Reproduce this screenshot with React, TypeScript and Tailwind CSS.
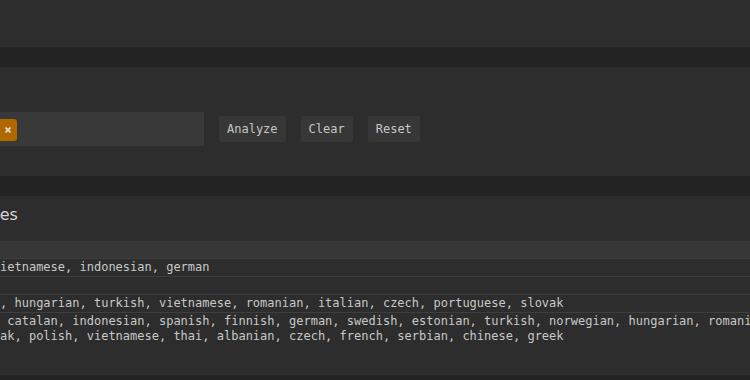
const rows = [
  "vietnamese, indonesian, german",
  "",
  "n, hungarian, turkish, vietnamese, romanian, italian, czech, portuguese, slovak",
  ", catalan, indonesian, spanish, finnish, german, swedish, estonian, turkish, norwegian, hungarian, romanian, slovak, polish, vietnamese, thai, albanian, czech, french, serbian, chinese, greek",
]

const Panel = ({ className, children }: { className: string; children?: React.ReactNode }) => {
  return <div className={"bg-[#2c2d2c] " + className}>{children}</div>
}

const App = () => {
  return (
    <div className="h-[380px] w-[750px] overflow-hidden bg-[#222322] font-['DejaVu_Sans_Mono',monospace] text-[12px] text-[#c8c8c8]">
      <Panel className="h-[47px]" />

      <Panel className="mt-[20px] h-[109px] pt-[45px]">
        <div className="-ml-[96px] flex items-center gap-[15px]">
          <div className="flex h-[34px] w-[300px] items-center bg-[#383938] pl-[33px]">
            <div className="mt-px flex h-[22px] w-[80px] items-center justify-between rounded-[3px] bg-[#b26800] pl-2 pr-[6px] text-[#f2e6d6]">
              <span>english</span>
              <svg width="6" height="6" viewBox="0 0 6 6">
                <path d="M0.5 0.5 L5.5 5.5 M5.5 0.5 L0.5 5.5" stroke="#e6e1da" strokeWidth="1.6" />
              </svg>
            </div>
          </div>
          <button className="h-[26px] rounded-[2px] bg-[#363736] px-2 pt-px leading-[25px] text-[#c6c6c6]">Analyze</button>
          <button className="h-[26px] rounded-[2px] bg-[#363736] px-2 pt-px leading-[25px] text-[#c6c6c6]">Clear</button>
          <button className="h-[26px] rounded-[2px] bg-[#363736] px-2 pt-px leading-[25px] text-[#c6c6c6]">Reset</button>
        </div>
      </Panel>

      <Panel className="mt-[20px] h-[179px] pt-[9px]">
        <div className="-ml-[71px] font-['DejaVu_Sans',sans-serif] text-[16px] leading-[19px] text-[#d4d4d4]">
          Techniques
        </div>

        <div className="mt-[17px]">
          <div className="h-[18px] border-b border-[#3d3e3d] bg-[#363736]" />
          {rows.map((r, i) => (
            <div key={i} className={i < rows.length - 1 ? "border-b border-[#3d3e3d] py-px" : "py-px"}>
              <div className="-ml-[7.22px] min-h-[15px] w-[810px] break-all leading-[15px]">{r}</div>
            </div>
          ))}
        </div>
      </Panel>
    </div>
  )
}

export default App
